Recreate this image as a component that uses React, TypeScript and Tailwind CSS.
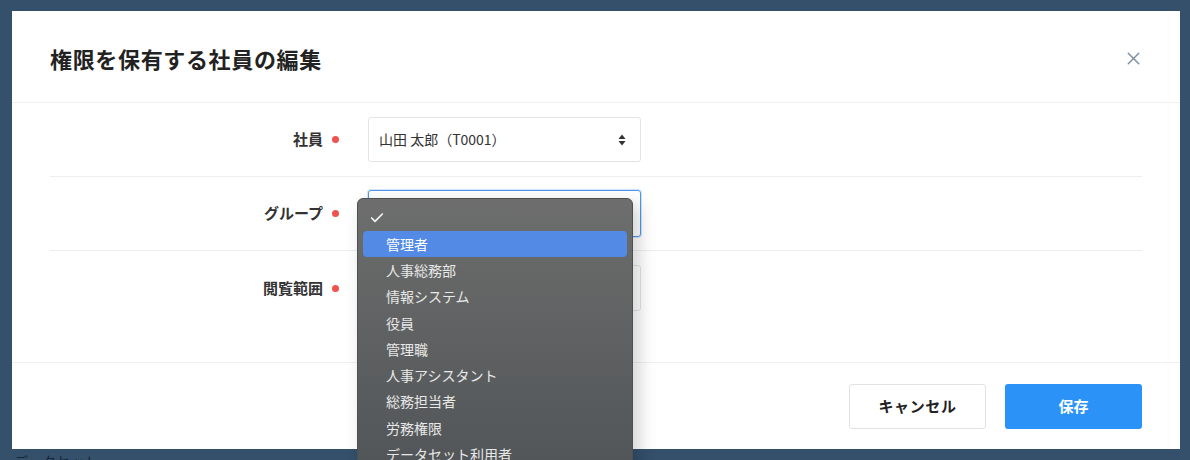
import React from 'react';
import { X, Check } from 'lucide-react';

const groups = [
  '管理者',
  '人事総務部',
  '情報システム',
  '役員',
  '管理職',
  '人事アシスタント',
  '総務担当者',
  '労務権限',
  'データセット利用者',
  'アカウント管理者',
];

const font = { fontFamily: '"Noto Sans CJK JP", "Noto Sans", sans-serif' };

const Required = () => <span className="ml-[9px] h-[7px] w-[7px] rounded-full bg-[#f0524f]" />;

const FormRow = ({ label, children, last }: { label: string; children: React.ReactNode; last?: boolean }) => (
  <div className={`flex h-[74px] items-center ${last ? '' : 'border-b border-[#eeeeee]'}`}>
    <div className="flex w-[289px] items-center justify-end">
      <span className="text-[15px] font-bold text-[#333333]">{label}</span>
      <Required />
    </div>
    <div className="ml-[29px] w-[273px]">{children}</div>
  </div>
);

const SortArrows = () => (
  <svg width="8" height="12" viewBox="0 0 8 12" className="fill-[#333333]">
    <path d="M4 0.5 L7.5 5 H0.5 Z" />
    <path d="M4 11.5 L7.5 7 H0.5 Z" />
  </svg>
);

export default function App() {
  return (
    <div className="relative h-[460px] w-[1190px] overflow-hidden bg-[#34506b] pl-[12px] pt-[11px]" style={font}>
      <div className="flex h-[438px] w-[1168px] flex-col bg-white">
        {/* header */}
        <div className="flex h-[92px] shrink-0 items-center justify-between border-b border-[#efefef] pl-[38px] pr-[36px] pt-[3px]">
          <h2 className="text-[22px] font-bold tracking-[0.03em] text-[#222222]">権限を保有する社員の編集</h2>
          <X size={21} strokeWidth={1.7} className="text-[#7f8fa3]" />
        </div>

        {/* body */}
        <div className="flex-1 px-[38px]">
          <FormRow label="社員">
            <div className="flex h-[45px] items-center justify-between rounded-[3px] border border-[#e4e4e4] pl-[10px] pr-[14px]">
              <span className="text-[14px] text-[#333333]">山田 太郎（T0001）</span>
              <SortArrows />
            </div>
          </FormRow>
          <FormRow label="グループ">
            <div className="h-[47px] rounded-[3px] border border-[#4d97ea] shadow-[0_0_0_1px_rgba(77,151,234,0.25)]" />
          </FormRow>
          <FormRow label="閲覧範囲" last>
            <div className="h-[46px] rounded-[3px] border border-[#e4e4e4]" />
          </FormRow>
        </div>

        {/* footer */}
        <div className="flex h-[87px] shrink-0 items-center justify-end gap-[19px] border-t border-[#efefef] pr-[38px]">
          <button className="h-[45px] w-[137px] rounded-[3px] border border-[#e2e2e2] bg-white text-[15px] font-bold tracking-[0.04em] text-[#222222]">
            キャンセル
          </button>
          <button className="h-[45px] w-[137px] rounded-[3px] bg-[#2b93f7] text-[15px] font-bold text-white">
            保存
          </button>
        </div>
      </div>

      <div className="pl-[2px] pt-[2px] text-[14px] text-[#16263a]">データセット</div>

      {/* native dropdown menu */}
      <div className="absolute left-[357px] top-[198px] w-[276px] rounded-t-[6px] border border-[#4d4f51] bg-gradient-to-b from-[#6d6e6d] to-[#4f5356] px-[5px] pt-[6px] shadow-[6px_6px_18px_rgba(0,0,0,0.18)]">
        <div className="flex h-[26px] items-center pl-[6px] text-[#f2f2f2]">
          <Check size={16} strokeWidth={2.6} />
        </div>
        {groups.map((g, i) => (
          <div
            key={g}
            className={`flex h-[26.3px] items-center rounded-[4px] pl-[23px] text-[14px] ${
              i === 0 ? 'bg-[#528ae6] text-white' : 'text-[#e8e8e8]'
            }`}
          >
            {g}
          </div>
        ))}
      </div>
    </div>
  );
}
